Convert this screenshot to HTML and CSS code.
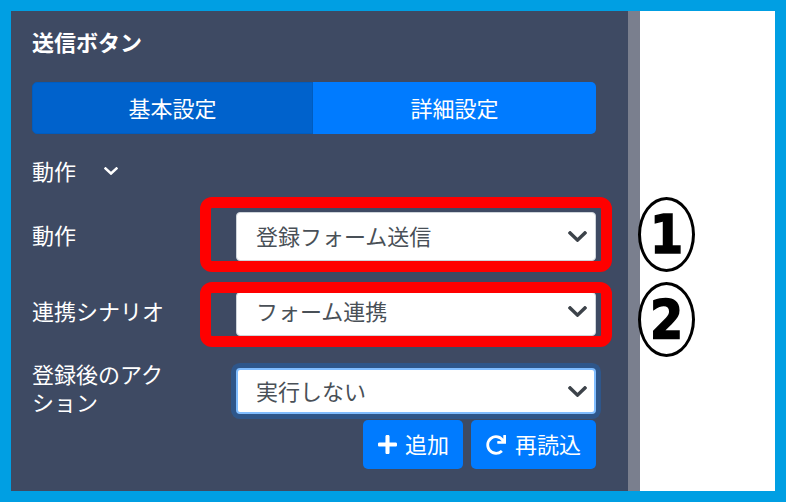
FILE: index.html
```html
<!DOCTYPE html>
<html lang="ja">
<head>
<meta charset="utf-8">
<title>送信ボタン</title>
<link rel="stylesheet" href="styles.css">
</head>
<body>
<div class="frame">
  <div class="panel">
    <h1 class="title">送信ボタン</h1>
    <div class="tabs">
      <button class="tab active">基本設定</button>
      <button class="tab">詳細設定</button>
    </div>
    <div class="toggle">動作
      <svg class="toggle-chev" viewBox="5 122 438 267" preserveAspectRatio="none"><path d="M207.029 381.476L12.686 187.132c-9.373-9.373-9.373-24.569 0-33.941l22.667-22.667c9.357-9.357 24.522-9.375 33.901-.04L224 284.505l154.745-154.021c9.379-9.335 24.544-9.317 33.901.04l22.667 22.667c9.373 9.373 9.373 24.569 0 33.941L240.971 381.476c-9.373 9.372-24.569 9.372-33.942 0z"/></svg>
    </div>

    <div class="form-row row-1">
      <label class="form-label">動作</label>
      <div class="select-wrap">
        <div class="select select-1"><span>登録フォーム送信</span>
          <svg class="sel-chev" viewBox="5 122 438 267" preserveAspectRatio="none"><path d="M207.029 381.476L12.686 187.132c-9.373-9.373-9.373-24.569 0-33.941l22.667-22.667c9.357-9.357 24.522-9.375 33.901-.04L224 284.505l154.745-154.021c9.379-9.335 24.544-9.317 33.901.04l22.667 22.667c9.373 9.373 9.373 24.569 0 33.941L240.971 381.476c-9.373 9.372-24.569 9.372-33.942 0z"/></svg>
        </div>
        <div class="highlight hl-1"></div>
      </div>
    </div>

    <div class="form-row row-2">
      <label class="form-label">連携シナリオ</label>
      <div class="select-wrap">
        <div class="select select-2"><span>フォーム連携</span>
          <svg class="sel-chev" viewBox="5 122 438 267" preserveAspectRatio="none"><path d="M207.029 381.476L12.686 187.132c-9.373-9.373-9.373-24.569 0-33.941l22.667-22.667c9.357-9.357 24.522-9.375 33.901-.04L224 284.505l154.745-154.021c9.379-9.335 24.544-9.317 33.901.04l22.667 22.667c9.373 9.373 9.373 24.569 0 33.941L240.971 381.476c-9.373 9.372-24.569 9.372-33.942 0z"/></svg>
        </div>
        <div class="highlight hl-2"></div>
      </div>
    </div>

    <div class="form-row row-3">
      <label class="form-label multi">登録後のアクション</label>
      <div class="select-wrap">
        <div class="select select-3 focused"><span>実行しない</span>
          <svg class="sel-chev" viewBox="5 122 438 267" preserveAspectRatio="none"><path d="M207.029 381.476L12.686 187.132c-9.373-9.373-9.373-24.569 0-33.941l22.667-22.667c9.357-9.357 24.522-9.375 33.901-.04L224 284.505l154.745-154.021c9.379-9.335 24.544-9.317 33.901.04l22.667 22.667c9.373 9.373 9.373 24.569 0 33.941L240.971 381.476c-9.373 9.372-24.569 9.372-33.942 0z"/></svg>
        </div>
      </div>
    </div>

    <div class="actions">
      <button class="btn btn-add">
        <svg class="ico-plus" viewBox="0 32 448 448"><path d="M416 208H272V64c0-17.67-14.330-32-32-32h-32c-17.67 0-32 14.33-32 32v144H32c-17.67 0-32 14.33-32 32v32c0 17.67 14.33 32 32 32h144v144c0 17.67 14.33 32 32 32h32c17.670 0 32-14.33 32-32V304h144c17.67 0 32-14.33 32-32v-32c0-17.67-14.33-32-32-32z"/></svg>
        <span>追加</span>
      </button>
      <button class="btn btn-reload">
        <svg class="ico-redo" viewBox="0 0 512 512"><path d="M500.33 0h-47.41a12 12 0 0 0-12 12.57l4 82.76A247.42 247.42 0 0 0 256 8C119.34 8 7.9 119.53 8 256.19 8.1 393.07 119.1 504 256 504a247.1 247.1 0 0 0 166.18-63.910 12 12 0 0 0 .48-17.43l-34-34a12 12 0 0 0-16.38-.55A176 176 0 1 1 402.1 157.8l-101.53-4.87a12 12 0 0 0-12.57 12v47.41a12 12 0 0 0 12 12h200.33a12 12 0 0 0 12-12V12a12 12 0 0 0-12-12z"/></svg>
        <span>再読込</span>
      </button>
    </div>
  </div>
  <div class="scrollbar"></div>
  <div class="preview">
    <div class="marker marker-1">1</div>
    <div class="marker marker-2">2</div>
  </div>
</div>
</body>
</html>
```

FILE: styles.css
```css
* { box-sizing: border-box; }

html, body {
  margin: 0;
  padding: 0;
}

body {
  font-family: "Noto Sans CJK JP", "Noto Sans", sans-serif;
  background: #009fe3;
}

.frame {
  width: 786px;
  height: 502px;
  padding: 11px;
  background: #009fe3;
  display: flex;
}

.panel {
  width: 617px;
  height: 480px;
  background: #3e4a63;
  padding: 0 32px 0 21px;
  color: #fff;
  font-size: 22px;
}

.scrollbar {
  width: 12px;
  height: 480px;
  background: #7a7f8e;
}

.preview {
  width: 135px;
  height: 480px;
  background: #fff;
  position: relative;
}

.title {
  margin: 16px 0 0 0;
  font-size: 22px;
  line-height: 28px;
  font-weight: 700;
}

.tabs {
  margin-top: 27px;
  display: flex;
  height: 52px;
}

.tab {
  font-family: inherit;
  font-size: 22px;
  color: #fff;
  border: none;
  padding: 0 0 2px 0;
  background: #007bff;
  flex: 1;
  border-radius: 0 5px 5px 0;
}

.tab.active {
  flex: 0 0 281px;
  background: #0062cc;
  border: 1px solid #005cbf;
  border-radius: 5px 0 0 5px;
}

.toggle {
  margin-top: 22px;
  line-height: 28px;
  display: flex;
  align-items: center;
}

.toggle-chev {
  width: 14px;
  height: 8px;
  fill: #fff;
  margin-left: 28px;
  margin-top: 2px;
}

.form-row {
  display: grid;
  grid-template-columns: 204px 1fr;
  align-items: center;
}

.row-1 { margin-top: 28px; }
.row-2 { margin-top: 31px; }
.row-3 { margin-top: 26px; align-items: start; }

.form-label {
  line-height: 28px;
  max-width: 145px;
  margin-top: -5px;
}

.row-2 .form-label { margin-top: -8px; }

.form-label.multi { margin-top: -3px; }

.select-wrap {
  position: relative;
}

.select {
  background: #fff;
  border: 1px solid #ced4da;
  border-radius: 4px;
  color: #495057;
  font-size: 22px;
  display: flex;
  align-items: center;
  justify-content: space-between;
  padding: 0 8px 3px 19px;
}

.select-1 { height: 49px; }
.select-2 { height: 44px; padding-bottom: 8px; }
.select-3 { height: 46px; margin-top: 6px; }

.select.focused {
  border: 2px solid #80bdff;
  padding-left: 18px;
  padding-right: 7px;
  box-shadow: 0 0 0 5px rgba(0, 123, 255, 0.25);
}

.sel-chev {
  width: 19px;
  height: 11px;
  fill: #3d434a;
  margin-top: 3px;
}

.highlight {
  position: absolute;
  border: 11px solid #ff0000;
  border-radius: 12px;
  left: -36px;
  width: 412px;
  pointer-events: none;
}

.hl-1 { top: -15px; height: 75px; }
.hl-2 { top: -10px; height: 65px; }

.actions {
  margin-top: 5px;
  display: flex;
  justify-content: flex-end;
  gap: 8px;
}

.btn {
  height: 49px;
  background: #007bff;
  border: none;
  border-radius: 5px;
  color: #fff;
  font-family: inherit;
  font-size: 22px;
  display: flex;
  align-items: center;
  gap: 8px;
  padding: 0 14px 3px 15px;
}

.btn-reload { padding-right: 15px; gap: 9px; }

.ico-plus {
  width: 19px;
  height: 19px;
  fill: #fff;
  margin-top: 3px;
}

.ico-redo {
  width: 20px;
  height: 20px;
  fill: #fff;
  margin-top: 3px;
}

.marker {
  position: absolute;
  left: -2px;
  width: 57px;
  height: 75px;
  border: 3px solid #000;
  border-radius: 50%;
  display: flex;
  align-items: center;
  justify-content: center;
  font-family: "Liberation Sans Narrow", "DejaVu Sans Condensed", sans-serif;
  font-weight: 700;
  font-size: 53px;
  line-height: 1;
  color: #000;
  -webkit-text-stroke: 1.5px #000;
}

.marker-1 { top: 186px; }
.marker-2 { top: 271px; }
```
